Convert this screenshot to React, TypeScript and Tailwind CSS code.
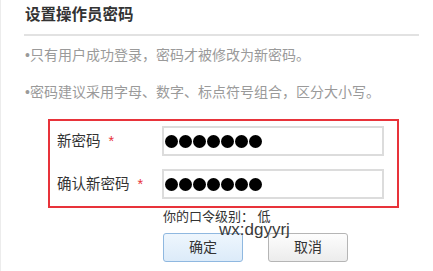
const FONT = { fontFamily: '"Liberation Sans", "Noto Sans CJK SC", sans-serif' };

function Dots() {
  return (
    <div className="flex items-center gap-[1px]">
      {Array.from({ length: 7 }).map((_, i) => (
        <span key={i} className="inline-block h-[13px] w-[13px] rounded-full bg-black" />
      ))}
    </div>
  );
}

function Field({ label }: { label: string }) {
  return (
    <div className="flex items-center">
      <div className="w-[105px] text-[14.5px] leading-[20px] text-[#333]">
        {label}
        <span className="ml-[8px] text-[#e8333a]">*</span>
      </div>
      <div className="flex h-[30px] w-[222px] items-center border-2 border-[#dcdcdc] pl-[1px]">
        <Dots />
      </div>
    </div>
  );
}

export default function App() {
  return (
    <div
      className="relative h-[271px] w-[433px] overflow-hidden border-l border-[#ececec] bg-white"
      style={FONT}
    >
      <div className="pl-[24px] pt-[5px] text-[15.5px] font-bold leading-[20px] text-[#333]">
        设置操作员密码
      </div>
      <div className="ml-[23px] mt-[9px] h-[2px] w-[395px] bg-[#e2e2e2]" />

      <div className="mt-[9px] pl-[24px] text-[14px] leading-[20px] text-[#9a9a9a]">
        •只有用户成功登录，密码才被修改为新密码。
      </div>
      <div className="mt-[17px] pl-[24px] text-[14px] leading-[20px] text-[#9a9a9a]">
        •密码建议采用字母、数字、标点符号组合，区分大小写。
      </div>

      <div className="ml-[47px] mt-[17px] flex h-[89px] w-[351px] flex-col gap-[13px] border-2 border-[#e8333a] pl-[7px] pt-[5px]">
        <Field label="新密码" />
        <Field label="确认新密码" />
      </div>

      <div className="pl-[162px] text-[13px] leading-[17px] text-[#333]">
        你的口令级别： 低
      </div>

      <div className="mt-[8px] flex gap-[25px] pl-[162px]">
        <button
          type="button"
          className="h-[29px] w-[80px] rounded-[3px] border border-[#8fb8e0] bg-gradient-to-b from-[#eef6fd] to-[#dcebf9] text-[14px] text-[#333]"
        >
          确定
        </button>
        <button
          type="button"
          className="h-[29px] w-[80px] rounded-[3px] border border-[#b5b5b5] bg-gradient-to-b from-[#fdfdfd] to-[#ececec] text-[14px] text-[#333]"
        >
          取消
        </button>
      </div>

      {/* watermark over the buttons */}
      <div className="absolute left-[218px] top-[219px] text-[17px] leading-[22px] text-[#3a3a3a]">
        wx:dgyyrj
      </div>
    </div>
  );
}
